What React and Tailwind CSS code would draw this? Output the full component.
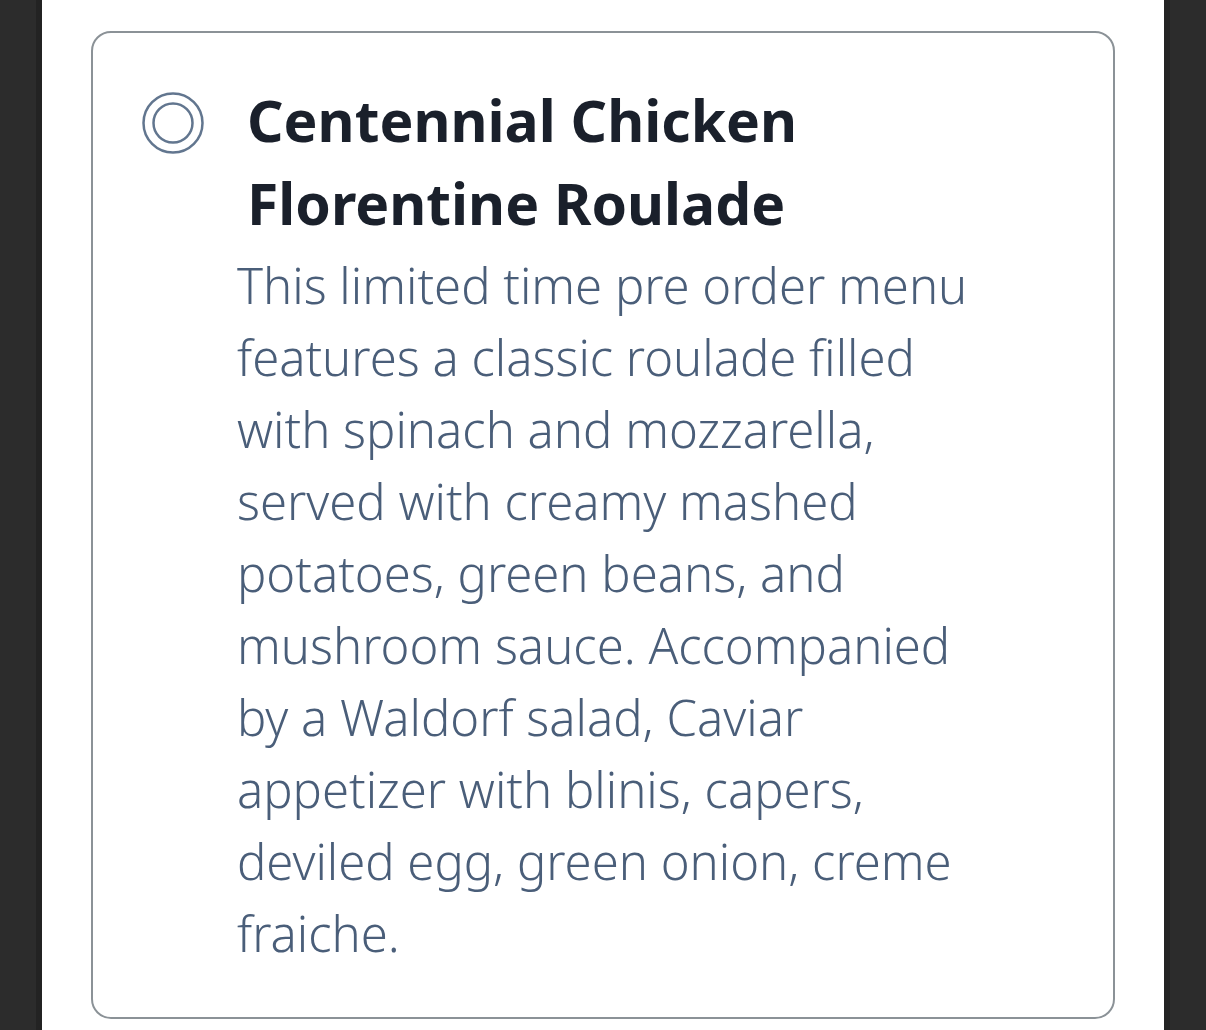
import React from 'react';

const descLines = [
  'This limited time pre order menu',
  'features a classic roulade filled',
  'with spinach and mozzarella,',
  'served with creamy mashed',
  'potatoes, green beans, and',
  'mushroom sauce. Accompanied',
  'by a Waldorf salad, Caviar',
  'appetizer with blinis, capers,',
  'deviled egg, green onion, creme',
  'fraiche.',
];

function RadioIcon() {
  return (
    <svg width="64" height="64" viewBox="0 0 64 64" className="shrink-0">
      <circle cx="32" cy="32" r="29.5" fill="none" stroke="#62768f" strokeWidth="2.5" />
      <circle cx="32" cy="32" r="19.5" fill="none" stroke="#62768f" strokeWidth="2.5" />
    </svg>
  );
}

export default function App() {
  return (
    <div className="w-[1206px] h-[1030px] bg-[#2c2c2c] flex overflow-hidden" style={{ fontFamily: '"Noto Sans", sans-serif' }}>
      <div className="w-[36px] shrink-0" />
      <div className="w-[6px] shrink-0 bg-[#232323]" />
      <div className="w-[1122px] shrink-0 bg-white px-[49px] pt-[31px]">
        {/* Card */}
        <div className="h-[988px] border-2 border-[#8b9297] rounded-[20px] pl-[48px] pt-[58px]">
          <div className="flex items-start">
            <RadioIcon />
            <h2 className="ml-[42px] -mt-[12px] text-[57px] leading-[83px] font-bold text-[#1a202b]">
              <span className="block">Centennial Chicken</span>
              <span className="block">Florentine Roulade</span>
            </h2>
          </div>
          <p className="ml-[96px] mt-[4px] text-[49px] leading-[72px] font-light text-[#4a5e79]">
            {descLines.map((l) => (
              <span key={l} className="block">{l}</span>
            ))}
          </p>
        </div>
      </div>
      <div className="w-[6px] shrink-0 bg-[#232323]" />
      <div className="flex-1" />
    </div>
  );
}
